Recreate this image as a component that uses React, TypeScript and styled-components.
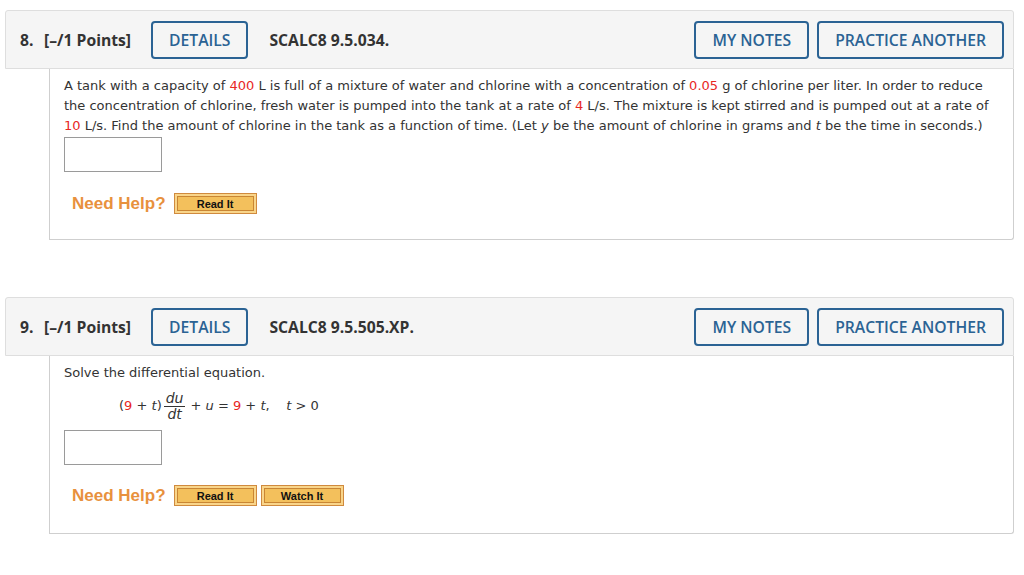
import styled, { createGlobalStyle } from 'styled-components'

const GlobalStyle = createGlobalStyle`
  body {
    margin: 0;
    background: #fff;
  }
`

const Page = styled.div`
  width: 1009px;
  padding: 10px 0 0 5px;
`

const Question = styled.section`
  margin-bottom: 57px;
`

const Header = styled.div`
  height: 57px;
  display: flex;
  align-items: center;
  padding: 0 9px 0 14px;
  background: #f5f5f5;
  border: 1px solid #dedede;
  border-radius: 3px 3px 0 0;
  font-family: "Open Sans", sans-serif;
  font-weight: 700;
  font-size: 15.7px;
  color: #333;
`

const Num = styled.span`
  width: 24px;
`

const Points = styled.span`
  margin-right: 20px;
`

const Code = styled.span`
  margin-left: 21px;
  flex: 1;
`

const OutlineButton = styled.button<{ $gap?: number }>`
  height: 38px;
  padding: 0 16px;
  margin-left: ${props => props.$gap || 0}px;
  background: #f5f5f5;
  border: 2px solid #2b6394;
  border-radius: 4px;
  color: #2b6394;
  font-family: "Open Sans", sans-serif;
  font-weight: 600;
  font-size: 15.7px;
  cursor: pointer;
`

const Body = styled.div<{ $top: number; $bottom: number }>`
  margin-left: 44px;
  padding: ${props => props.$top}px 14px ${props => props.$bottom}px 14px;
  border: 1px solid #cfcfcf;
  border-top: none;
  border-radius: 0 0 3px 0;
  font-family: "DejaVu Sans", Verdana, sans-serif;
  font-size: 13px;
  line-height: 20px;
  color: #333;
`

const Prompt = styled.p`
  margin: 0;
`

const Red = styled.span`
  color: #e8271f;
`

const Var = styled.i``

const Equation = styled.div`
  display: flex;
  align-items: center;
  margin: 8px 0 9px 55px;
  line-height: 14px;
  white-space: pre;
`

const Fraction = styled.span`
  display: inline-flex;
  flex-direction: column;
  align-items: center;
  margin: 0 5px 0 2px;
  font-style: italic;
  font-size: 14px;
  line-height: 14px;
`

const Numer = styled.span`
  padding: 0 2px 1px;
  border-bottom: 1px solid #333;
`

const AnswerBox = styled.div<{ $top: number }>`
  width: 96px;
  height: 33px;
  margin-top: ${props => props.$top}px;
  border: 1px solid #9a9a9a;
  background: #fff;
`

const HelpRow = styled.div<{ $top: number }>`
  display: flex;
  align-items: center;
  margin-top: ${props => props.$top}px;
  padding-left: 8px;
`

const HelpLabel = styled.span`
  font-family: "Liberation Sans", Arial, sans-serif;
  font-weight: 700;
  font-size: 17px;
  color: #e8913d;
  margin-right: 8px;
`

const HelpButton = styled.button`
  width: 83px;
  height: 21px;
  margin-right: 4px;
  padding: 2px;
  background: #f9d58a;
  border: 1px solid #d08a3e;
  cursor: pointer;
  display: flex;
`

const HelpInner = styled.span`
  flex: 1;
  display: flex;
  align-items: center;
  justify-content: center;
  background: #f3c05c;
  border: 1px solid #c98634;
  font-family: "Liberation Sans", Arial, sans-serif;
  font-weight: 700;
  font-size: 11px;
  color: #111;
`

interface QuestionHeadProps {
  num: string;
  code: string;
}

const QuestionHead = ({ num, code }: QuestionHeadProps) => (
  <Header>
    <Num>{num}</Num>
    <Points>[–/1 Points]</Points>
    <OutlineButton>DETAILS</OutlineButton>
    <Code>{code}</Code>
    <OutlineButton>MY NOTES</OutlineButton>
    <OutlineButton $gap={8}>PRACTICE ANOTHER</OutlineButton>
  </Header>
)

const NeedHelp = ({ items }: { items: string[] }) => (
  <>
    <HelpLabel>Need Help?</HelpLabel>
    {items.map(item => (
      <HelpButton key={item}>
        <HelpInner>{item}</HelpInner>
      </HelpButton>
    ))}
  </>
)

const App = () => {
  return (
    <Page>
      <GlobalStyle />
      <Question>
        <QuestionHead num="8." code="SCALC8 9.5.034." />
        <Body $top={7} $bottom={25}>
          <Prompt>
            A tank with a capacity of <Red>400</Red> L is full of a mixture of water and chlorine with a concentration of <Red>0.05</Red> g of chlorine per liter. In order to reduce the concentration of chlorine, fresh water is pumped into the tank at a rate of <Red>4</Red> L/s. The mixture is kept stirred and is pumped out at a rate of <Red>10</Red> L/s. Find the amount of chlorine in the tank as a function of time. (Let <Var>y</Var> be the amount of chlorine in grams and <Var>t</Var> be the time in seconds.)
          </Prompt>
          <AnswerBox $top={1} />
          <HelpRow $top={21}>
            <NeedHelp items={['Read It']} />
          </HelpRow>
        </Body>
      </Question>
      <Question>
        <QuestionHead num="9." code="SCALC8 9.5.505.XP." />
        <Body $top={7} $bottom={27}>
          <Prompt>Solve the differential equation.</Prompt>
          <Equation>
            <span>(<Red>9</Red> + <Var>t</Var>)</span>
            <Fraction>
              <Numer>du</Numer>
              <span>dt</span>
            </Fraction>
            <span>+ <Var>u</Var> = <Red>9</Red> + <Var>t</Var>,    <Var>t</Var> &gt; 0</span>
          </Equation>
          <AnswerBox $top={0} />
          <HelpRow $top={20}>
            <NeedHelp items={['Read It', 'Watch It']} />
          </HelpRow>
        </Body>
      </Question>
    </Page>
  )
}

export default App
